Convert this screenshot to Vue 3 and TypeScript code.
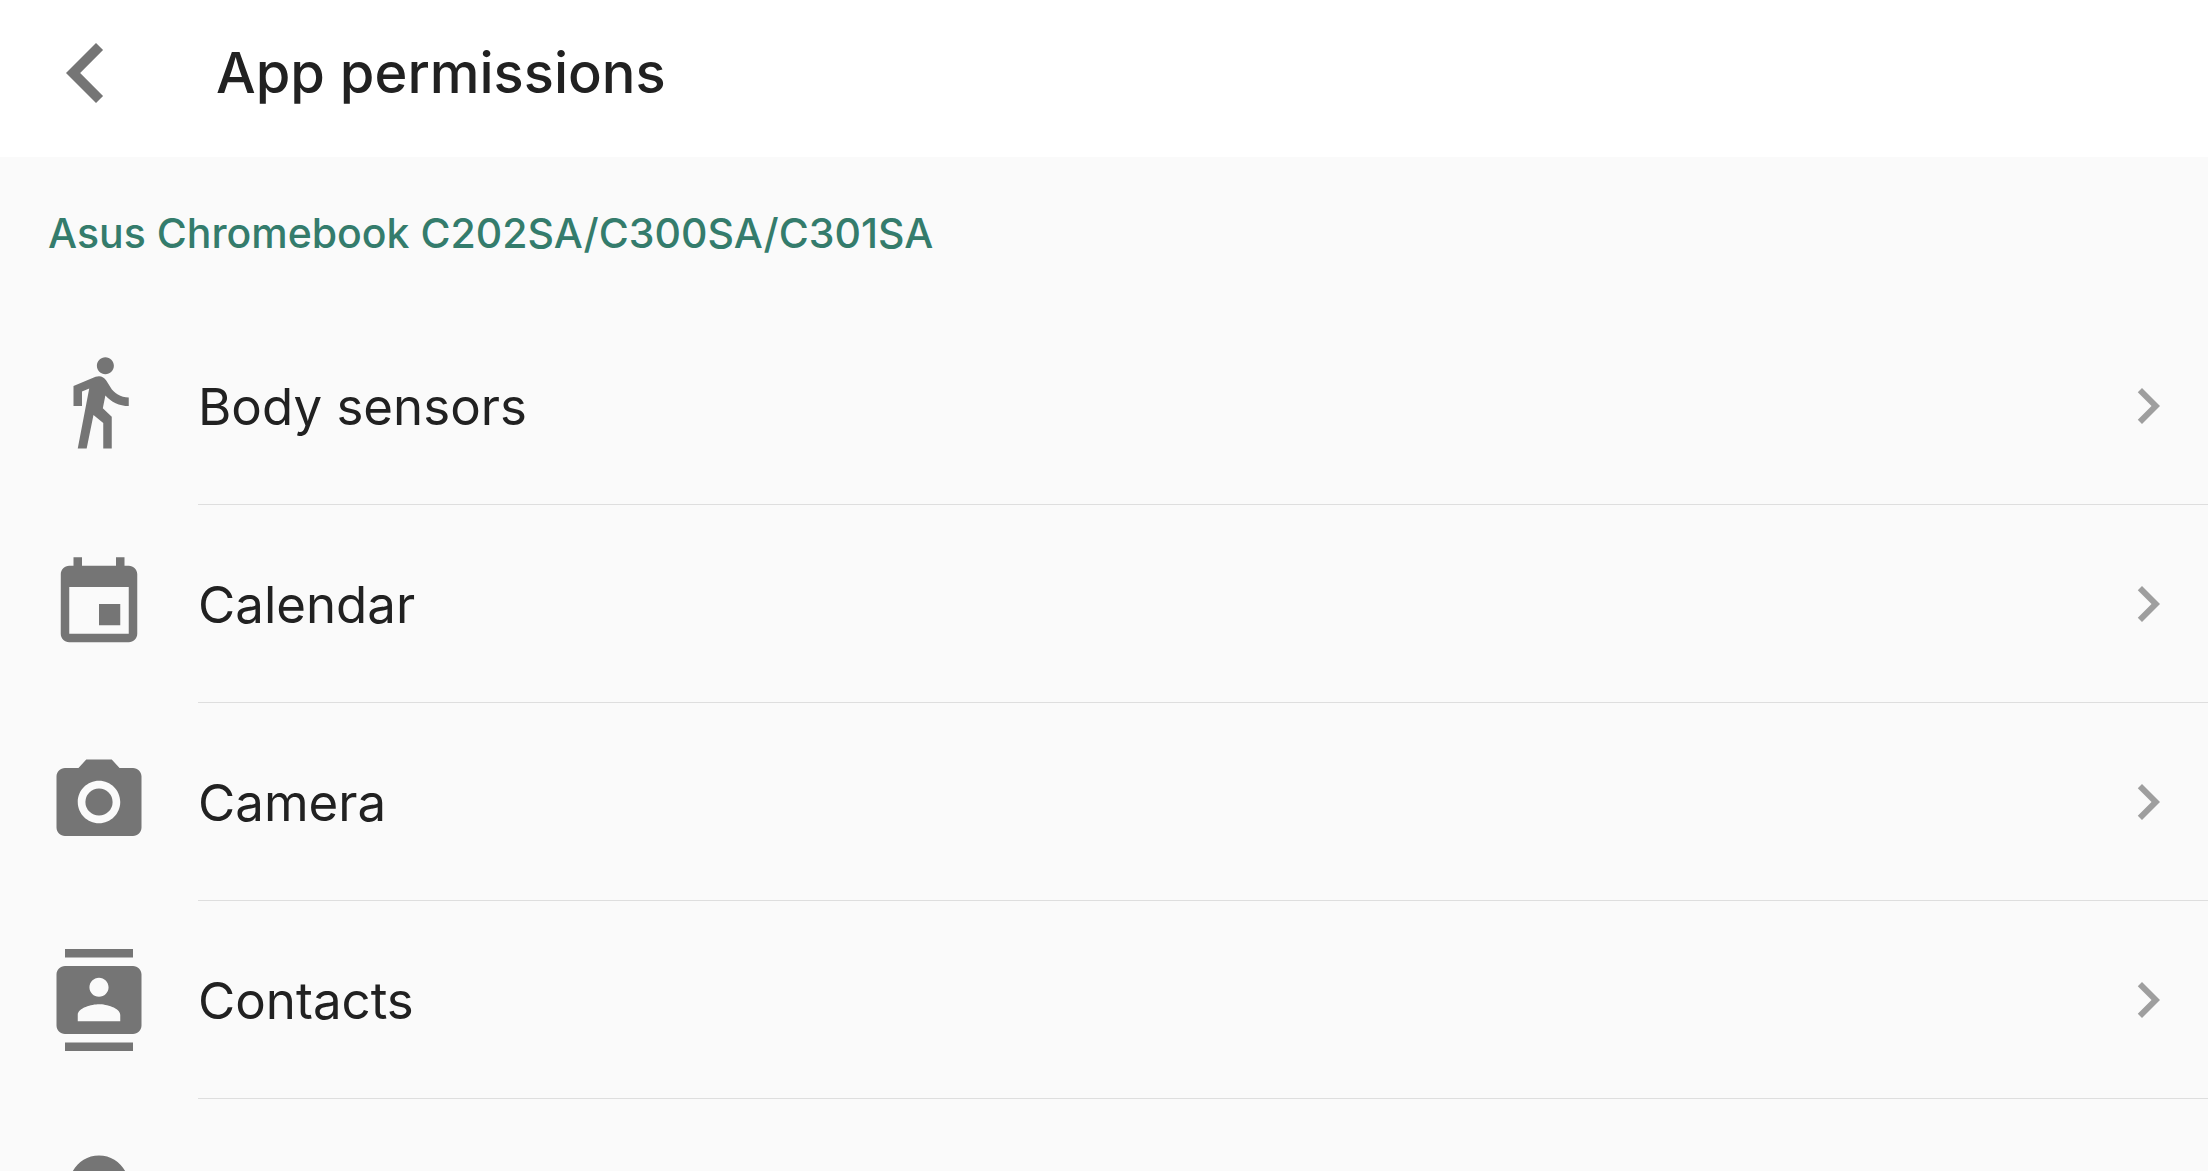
<script setup lang="ts">
interface Permission {
  id: string
  label?: string
  path: string
}

const device = 'Asus Chromebook C202SA/C300SA/C301SA'

const permissions: Permission[] = [
  {
    id: 'sensors',
    label: 'Body sensors',
    path: 'M13.5 4.5c1.1 0 2-.9 2-2s-.9-2-2-2-2 .9-2 2 .9 2 2 2zM9.7 7.9L7 22h2.1l1.6-7.9 2.3 1.9v6h2v-7.5l-2.1-2 .6-3C14.8 11 16.8 12 19 12v-2c-1.9 0-3.5-1-4.3-2.4l-1-1.6c-.4-.6-1-1-1.7-1-.3 0-.5.1-.8.1L6 7.3V12h2V8.6l1.7-.7',
  },
  {
    id: 'calendar',
    label: 'Calendar',
    path: 'M17 12h-5v5h5v-5zM16 1v2H8V1H6v2H5c-1.11 0-1.99.9-1.99 2L3 19c0 1.1.89 2 2 2h14c1.1 0 2-.9 2-2V5c0-1.1-.9-2-2-2h-1V1h-2zm3 18H5V8h14v11z',
  },
  {
    id: 'camera',
    label: 'Camera',
    path: 'M12 8.8a3.2 3.2 0 1 0 0 6.4a3.2 3.2 0 1 0 0-6.4zM9 2L7.17 4H4c-1.1 0-2 .9-2 2v12c0 1.1.9 2 2 2h16c1.1 0 2-.9 2-2V6c0-1.1-.9-2-2-2h-3.17L15 2H9zm3 15c-2.76 0-5-2.24-5-5s2.24-5 5-5 5 2.24 5 5-2.24 5-5 5z',
  },
  {
    id: 'contacts',
    label: 'Contacts',
    path: 'M20 0H4v2h16V0zM4 24h16v-2H4v2zM20 4H4c-1.1 0-2 .9-2 2v12c0 1.1.9 2 2 2h16c1.1 0 2-.9 2-2V6c0-1.1-.9-2-2-2zm-8 2.75c1.24 0 2.25 1.01 2.25 2.25s-1.01 2.25-2.25 2.25S9.75 10.24 9.75 9 10.76 6.75 12 6.75zM17 17H7v-1.5c0-1.67 3.33-2.5 5-2.5s5 .83 5 2.5V17z',
  },
  {
    id: 'location',
    path: 'M12 2C8.13 2 5 5.13 5 9c0 5.25 7 13 7 13s7-7.75 7-13c0-3.87-3.13-7-7-7zm0 9.5c-1.38 0-2.5-1.12-2.5-2.5s1.12-2.5 2.5-2.5 2.5 1.12 2.5 2.5-1.12 2.5-2.5 2.5z',
  },
]
</script>

<template>
  <div class="screen">
    <header class="bar">
      <button class="back" type="button" aria-label="Back">
        <svg viewBox="0 0 24 24" aria-hidden="true">
          <path d="M15.41 7.41L14 6l-6 6 6 6 1.41-1.41L10.83 12z" />
        </svg>
      </button>
      <h1 class="title">App permissions</h1>
    </header>
    <main class="content">
      <h2 class="device">{{ device }}</h2>
      <ul class="list">
        <li v-for="p in permissions" :key="p.id">
          <button class="row" type="button" :aria-label="p.label ?? p.id">
            <svg class="icon" viewBox="0 0 24 24" aria-hidden="true">
              <path :d="p.path" />
            </svg>
            <span class="body">
              <span class="label">{{ p.label }}</span>
              <svg class="chevron" viewBox="0 0 24 24" aria-hidden="true">
                <path d="M10 6L8.59 7.41 13.17 12l-4.58 4.59L10 18l6-6z" />
              </svg>
            </span>
          </button>
        </li>
      </ul>
    </main>
  </div>
</template>

<style>
body {
  margin: 0;
  background: #fafafa;
}
</style>

<style scoped>
.screen {
  display: flex;
  flex-direction: column;
  height: 100vh;
  background: #fafafa;
  color: #212121;
  font-family: Inter, Roboto, sans-serif;
}

svg {
  display: block;
  flex: none;
  fill: currentColor;
}

button {
  padding: 0;
  border: 0;
  background: none;
  color: inherit;
  font: inherit;
  text-align: left;
  cursor: pointer;
}

.bar {
  display: flex;
  flex: none;
  align-items: flex-start;
  gap: 70px;
  padding: 13px 26px 24px;
  background: #fff;
}

.back {
  color: #757575;
}

.back svg {
  width: 120px;
  height: 120px;
}

.title {
  margin: 0;
  font-size: 56px;
  font-weight: 500;
  line-height: 120px;
}

.content {
  flex: 1;
  min-height: 0;
  overflow-y: auto;
  scrollbar-width: none;
}

.device {
  margin: 0;
  padding: 2px 48px 0;
  color: #347c6c;
  font-size: 41px;
  font-weight: 500;
  line-height: 148px;
}

.list {
  margin: 0;
  padding: 0;
  list-style: none;
}

.row {
  display: flex;
  align-items: center;
  gap: 48px;
  width: 100%;
  padding-left: 48px;
}

.icon {
  width: 102px;
  height: 102px;
  color: #757575;
}

.body {
  display: flex;
  flex: 1;
  align-items: center;
  justify-content: space-between;
  min-height: 197px;
  padding-right: 24px;
  border-bottom: 1px solid #dedede;
}

.label {
  padding-top: 2px;
  font-size: 51px;
  line-height: 64px;
}

.chevron {
  width: 72px;
  height: 72px;
  color: #9e9e9e;
}
</style>
